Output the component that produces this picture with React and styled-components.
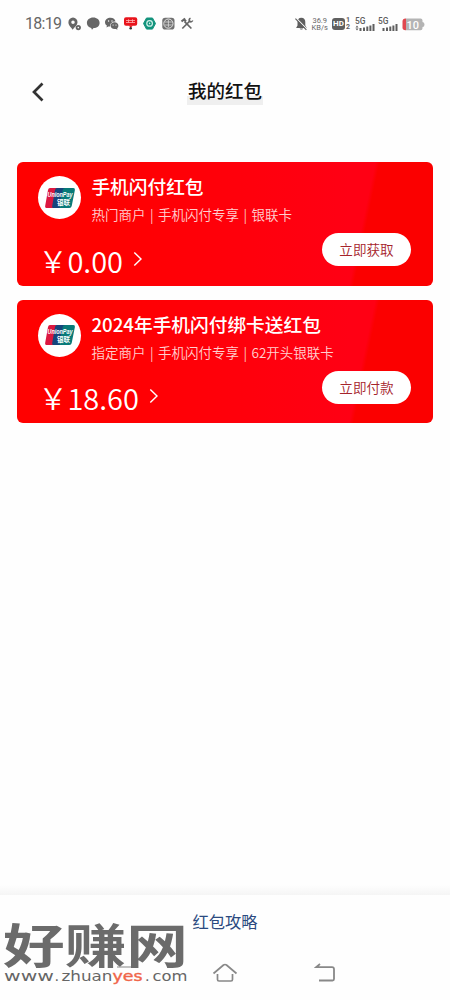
import React from 'react';
import styled, { createGlobalStyle } from 'styled-components';

const GlobalStyle = createGlobalStyle`
    * {
        box-sizing: border-box;
    }
    body {
        margin: 0;
        background: #fefefe;
        font-family: "Noto Sans CJK SC", "Noto Sans", sans-serif;
    }
    svg {
        display: block;
        flex: none;
    }
`

const cards = [
    {
        id: 1,
        title: '手机闪付红包',
        tags: ['热门商户', '手机闪付专享', '银联卡'],
        amount: '0.00',
        action: '立即获取',
    },
    {
        id: 2,
        title: '2024年手机闪付绑卡送红包',
        tags: ['指定商户', '手机闪付专享', '62开头银联卡'],
        amount: '18.60',
        action: '立即付款',
    },
];

const NoticeIcons = () => (
    <svg width="128" height="16" viewBox="67 16 128 16">
        <g fill="#666">
            <path fillRule="evenodd" d="M73 17.500a4.800 4.800 0 0 0-4.600 5c0 3 3 5 4.300 7.300c1-2 4.800-4.500 4.800-7.500a4.600 4.600 0 0 0-4.500-4.800zm0 3a1.700 1.700 0 1 1 0 3.500a1.700 1.700 0 0 1 0-3.500z" />
            <circle cx="78.300" cy="27.600" r="2.600" />
            <path d="M93.200 17.600c3.800 0 6.400 2.300 6.400 5.300s-2.600 5.200-6 5.200l-1.600 1.600l-.8-1.800c-2.500-.6-4.300-2.600-4.300-5c0-3 2.700-5.300 6.300-5.300z" />
            <path d="M110.500 17.800c2.700 0 4.700 1.600 5 3.700c-3.300 0-5.700 2-5.500 5.100c-.6 0-1.200-.1-1.700-.2l-1.800 1l.4-1.800c-1.200-.8-1.900-2-1.900-3.400c0-2.500 2.400-4.400 5.500-4.400z" />
            <path d="M114.500 22.300c2.200 0 3.900 1.500 3.900 3.400c0 1-.5 1.900-1.200 2.500l.2 1.500l-1.500-.8c-3 .6-5.400-1-5.400-3.300c0-1.800 1.800-3.300 4-3.300z" />
        </g>
        <g fill="#fff">
            <circle cx="108.600" cy="21" r=".7" />
            <circle cx="112" cy="21" r=".7" />
            <circle cx="113.100" cy="25" r=".6" />
            <circle cx="116" cy="25" r=".6" />
            <circle cx="78.300" cy="27.600" r=".8" />
        </g>
        <rect x="124" y="17.200" width="13.200" height="8.500" rx="2" fill="#e8141c" />
        <path d="M126 20.500h9M126 22.500h9M128.500 19.300v3.500M132.500 19.300v3.500" stroke="#ffb0b0" strokeWidth=".8" />
        <path d="M128.500 25.500h4.500l-2.200 2z" fill="#e8141c" />
        <circle cx="130.700" cy="28.300" r="1.300" fill="#333" />
        <path d="M146.500 18h6l3 5.500l-3 5.600h-6l-3-5.600z" fill="#12937c" stroke="#12937c" strokeLinejoin="round" />
        <circle cx="149.600" cy="23.400" r="2.800" fill="none" stroke="#d5f2ec" strokeWidth="1.200" />
        <circle cx="149.600" cy="23.400" r=".8" fill="#d5f2ec" />
        <rect x="162.300" y="17.700" width="12.200" height="11.800" rx="2.800" fill="#707070" />
        <circle cx="168.400" cy="23.600" r="4.600" fill="none" stroke="#eee" strokeWidth=".9" />
        <path d="M165 22h6.800M165 25h6.800M168.400 20v7.200" stroke="#ddd" strokeWidth=".8" />
        <g fill="none" stroke="#666" strokeWidth="1.700">
            <path d="M182.300 28.500l8-8M184.600 21.700l6.800 6.800" />
            <path d="M181.500 21.500l3.600-3M184 19.500l2 2" strokeWidth="2.200" />
            <path d="M192.800 20.500a2.500 2.500 0 0 1-3.300 1a2.500 2.500 0 0 1 1-3.300" strokeWidth="1.500" />
        </g>
    </svg>
)

const MutedBell = () => (
    <svg width="13" height="14" viewBox="0 0 13 14">
        <path d="M6.300.8c2.700 0 4 2 4 4.200v3.400l1.200 2v.6H1.300v-.6l1.200-2V5c0-2.200 1.200-4.200 3.800-4.200zM4.700 11.500h3.400c-.3 1.300-3.100 1.300-3.400 0z" fill="#5f5f5f" />
        <path d="M1.200 1.200l11 11.300" stroke="#fefefe" strokeWidth="1.100" />
        <path d="M.4 1.600l11 11.300" stroke="#5f5f5f" strokeWidth="1.200" />
    </svg>
)

const Signal = ({ data }) => (
    <svg width="20" height="15" viewBox="0 0 20 15">
        <text x="0" y="7" fontFamily="Roboto, sans-serif" fontSize="8.500" fontWeight="500" fill="#5f5f5f" textLength="10.500" lengthAdjust="spacingAndGlyphs">5G</text>
        {data && <path d="M.5 10.500l1.500-2l1.500 2zM.5 11.500l1.500 2l1.500-2z" fill="#5f5f5f" />}
        <path d="M5.500 11v3M9 10.500v3.500M12.300 9.500v4.500M15.400 8.500v5.500M18.500 7v7" stroke="#5f5f5f" strokeWidth="2" />
    </svg>
)

const Battery = () => (
    <svg width="23" height="13" viewBox="0 0 23 13">
        <path d="M4 .5h14.500q2 0 2 2v1.500q2 0 2 2.500t-2 2.500v1.300q0 2-2 2H4z" fill="#b4b4b4" />
        <path d="M4 .5h-.500q-3 0-3 3v6q0 2.800 3 2.800h.500z" fill="#e04850" />
        <text x="4.500" y="10.500" fontFamily="Roboto, sans-serif" fontSize="11" fontWeight="500" fill="#fff" textLength="12.500" lengthAdjust="spacingAndGlyphs">10</text>
    </svg>
)

const UnionPayLogo = () => (
    <svg width="32" height="22" viewBox="0 0 32 22">
        <path d="M5 1h10l-4 20H3q-2.300 0-1.800-2.300L4 3q.4-2 2-2z" fill="#dc1740" />
        <path d="M13 1h9l-4 20H9.200q-1.500 0-1-2L11 3q.400-2 2-2z" fill="#16457c" />
        <path d="M21 1h8.300q2 0 1.600 2l-3.200 16q-.400 2-2.400 2h-9q-1.300 0-1-2L18.700 3q.400-2 2.300-2z" fill="#087a78" />
        <text x="3.500" y="10" fontFamily="Liberation Sans, sans-serif" fontSize="6.500" fontWeight="700" fontStyle="italic" fill="#fff" textLength="25" lengthAdjust="spacingAndGlyphs">UnionPay</text>
        <text x="13" y="17.500" fontFamily="Noto Sans CJK SC, sans-serif" fontSize="6.500" fontWeight="700" fill="#fff" textLength="13" lengthAdjust="spacingAndGlyphs">银联</text>
    </svg>
)

const RedPacket = ({ title, tags, amount, action }) => (
    <Card>
        <Badge><UnionPayLogo /></Badge>
        <Info>
            <CardTitle>{title}</CardTitle>
            <Tags>
                {tags.map(tag => <Tag key={tag}>{tag}</Tag>)}
            </Tags>
        </Info>
        <Amount>
            ￥{amount}
            <svg width="10" height="16" viewBox="0 0 10 16">
                <path d="M1.300 1.500L8 8L1.300 14.500" fill="none" stroke="#fff" strokeWidth="1.400" />
            </svg>
        </Amount>
        <ActionButton>{action}</ActionButton>
    </Card>
)

const Watermark = () => (
    <WatermarkWrapper>
        <svg width="190" height="80" viewBox="0 907 190 80">
            <text x="3" y="962.500" fontFamily="Noto Sans CJK SC, sans-serif" fontSize="47" fontWeight="700" fill="#6b6b6b" textLength="185" lengthAdjust="spacingAndGlyphs">好赚网</text>
            <g fontFamily="DejaVu Sans, sans-serif" fontSize="14.500" fill="#666">
                <text x="4" y="981" textLength="50" lengthAdjust="spacingAndGlyphs">www</text>
                <text x="54.500" y="981">.</text>
                <text x="61.500" y="981" textLength="51" lengthAdjust="spacingAndGlyphs">zhuan</text>
                <text x="112.500" y="981" fill="#f0664a" stroke="#f0664a" strokeWidth=".4" textLength="30" lengthAdjust="spacingAndGlyphs">yes</text>
                <text x="145" y="981">.</text>
                <text x="152.500" y="981" textLength="35" lengthAdjust="spacingAndGlyphs">com</text>
            </g>
        </svg>
    </WatermarkWrapper>
)

const App = () => {
    return (
        <Screen>
            <GlobalStyle />
            <StatusBar>
                <Clock>18:19</Clock>
                <NoticeIcons />
                <StatusRight>
                    <MutedBell />
                    <Speed><span>36.9</span><span>KB/s</span></Speed>
                    <Volte>
                        <HdLabel>HD</HdLabel>
                        <SimNumbers><span>1</span><span>2</span></SimNumbers>
                    </Volte>
                    <Signal data />
                    <Signal />
                    <Battery />
                </StatusRight>
            </StatusBar>
            <Header>
                <svg width="14" height="22" viewBox="0 0 14 22">
                    <path d="M12.500 2.500L4 11L12.500 19.500" fill="none" stroke="#333" strokeWidth="2.700" />
                </svg>
                <PageTitle>我的红包</PageTitle>
            </Header>
            <CardList>
                {cards.map(card => <RedPacket key={card.id} {...card} />)}
            </CardList>
            <FooterShade />
            <Footer>
                <GuideLink>红包攻略</GuideLink>
                <NavKeys>
                    <svg width="22" height="18" viewBox="0 0 22 18">
                        <path d="M3 3h14" stroke="#999" strokeWidth="1.200" />
                    </svg>
                    <svg width="26" height="20" viewBox="0 0 26 20">
                        <path d="M1.500 10.500L11.500 2Q13 1 14.500 2L24.500 10.500M5.500 11v5.500q0 1.500 1.500 1.500h12q1.500 0 1.500-1.500V11" fill="none" stroke="#888" strokeWidth="1.700" />
                    </svg>
                    <svg width="22" height="20" viewBox="0 0 22 20">
                        <path d="M6 1L2 4.200H18q2 0 2 2V16q0 1.500-1.500 1.500H5" fill="none" stroke="#888" strokeWidth="1.800" />
                    </svg>
                </NavKeys>
                <Watermark />
            </Footer>
        </Screen>
    );
}

export default App;

const Screen = styled.div`
    display: flex;
    flex-direction: column;
    width: 450px;
    height: 1000px;
    overflow: hidden;
    background: #fefefe;
`

const StatusBar = styled.div`
    display: flex;
    align-items: center;
    height: 48px;
    padding: 0 25px;
`

const Clock = styled.span`
    width: 42px;
    font: 400 16px/16px Roboto, sans-serif;
    letter-spacing: -0.7px;
    color: #666;
`

const StatusRight = styled.div`
    display: flex;
    align-items: center;
    gap: 3.7px;
    margin-left: auto;
`

const Speed = styled.div`
    display: flex;
    flex-direction: column;
    align-items: center;
    width: 17px;
    font: 400 7.5px/7px Roboto, sans-serif;
    color: #666;
`

const Volte = styled.div`
    display: flex;
    align-items: center;
    gap: 1px;
`

const HdLabel = styled.span`
    width: 13px;
    height: 12px;
    border-radius: 3px;
    background: #5f5f5f;
    color: #fff;
    font: 700 8px/12px Roboto, sans-serif;
    text-align: center;
`

const SimNumbers = styled.div`
    display: flex;
    flex-direction: column;
    width: 5px;
    font: 700 7px/7px Roboto, sans-serif;
    color: #5f5f5f;
`

const Header = styled.header`
    display: grid;
    grid-template-columns: 1fr auto 1fr;
    align-items: center;
    height: 88px;
    padding: 0 30px;
`

const PageTitle = styled.h1`
    margin: 0;
    padding: 0 0.5px 4px;
    background: linear-gradient(transparent 64%, #efefef 64%);
    font-size: 18.5px;
    line-height: 22px;
    font-weight: 500;
    color: #111;
`

const CardList = styled.main`
    display: flex;
    flex-direction: column;
    flex: 1;
    gap: 14px;
    padding: 26.4px 17.5px 0 17.4px;
`

const Card = styled.section`
    display: grid;
    grid-template-columns: 42px 1fr auto;
    grid-template-rows: 55px 1fr;
    column-gap: 11px;
    height: 123.5px;
    padding: 12px 21.5px 0 21px;
    border-radius: 6px;
    background:
        linear-gradient(102deg, transparent 81%, #fb0000 82%),
        linear-gradient(90deg, #ff0000 20%, #ff0014 80%);
    color: #fff;
`

const Badge = styled.div`
    display: flex;
    align-items: center;
    justify-content: center;
    width: 43px;
    height: 43px;
    margin-top: 2px;
    border-radius: 50%;
    background: #fff;
`

const Info = styled.div`
    grid-column: 2 / 4;
`

const CardTitle = styled.h2`
    margin: -2px 0 0;
    font-size: 18.7px;
    line-height: 27px;
    font-weight: 500;
    white-space: nowrap;
`

const Tags = styled.div`
    display: flex;
    align-items: center;
    margin-top: 2px;
    font-size: 13.5px;
    line-height: 27px;
    font-weight: 350;
    color: #ffd0d0;
`

const Tag = styled.span`
    & + &::before {
        content: '|';
        margin: 0 4.5px;
    }
`

const Amount = styled.div`
    display: flex;
    align-items: center;
    grid-column: 1 / 3;
    height: 56px;
    padding-top: 5px;
    font-size: 29px;
    line-height: 40px;
    font-weight: 350;
    svg {
        margin: 0 0 2px 10px;
    }
`

const ActionButton = styled.button`
    width: 89px;
    height: 33px;
    margin-top: 4px;
    padding: 0 0 1px;
    border: 0;
    border-radius: 17px;
    background: #fff;
    color: #a5232b;
    font-family: inherit;
    font-size: 13.6px;
    font-weight: 350;
`

const FooterShade = styled.div`
    height: 10px;
    background: linear-gradient(#fefefe, #f5f5f5);
`

const Footer = styled.footer`
    position: relative;
    height: 105px;
    background: #fefefe;
`

const GuideLink = styled.div`
    padding-top: 14px;
    font-size: 16.3px;
    line-height: 24px;
    color: #2b4a80;
    text-align: center;
`

const NavKeys = styled.div`
    display: flex;
    align-items: center;
    justify-content: space-between;
    height: 22px;
    margin-top: 29px;
    padding: 0 114px;
`

/* sits over the footer's left corner */
const WatermarkWrapper = styled.div`
    position: absolute;
    left: 0;
    top: 12px;
`
